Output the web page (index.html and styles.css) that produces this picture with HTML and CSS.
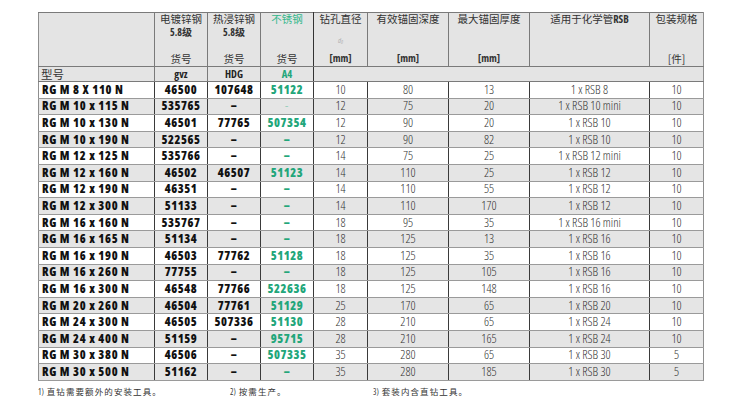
FILE: index.html
```html
<!DOCTYPE html>
<html lang="zh">
<head>
<meta charset="utf-8">
<title>RG M</title>
<link rel="stylesheet" href="styles.css">
</head>
<body>
<div class="page">
<table class="spec">
  <colgroup>
    <col class="c1"><col class="c2"><col class="c3"><col class="c4"><col class="c5"><col class="c6"><col class="c7"><col class="c8"><col class="c9">
  </colgroup>
  <thead>
    <tr class="h1">
      <th class="first"><div class="hd"></div></th>
      <th><div class="hd"><span class="l1">电镀锌钢</span><span class="l2">5.8级</span><span class="bot cj">货号</span></div></th>
      <th><div class="hd"><span class="l1">热浸锌钢</span><span class="l2">5.8级</span><span class="bot cj">货号</span></div></th>
      <th class="sep"><div class="hd"><span class="l1 green">不锈钢</span><span class="bot cj">货号</span></div></th>
      <th><div class="hd"><span class="l1">钻孔直径</span><span class="sym">d<sub>0</sub></span><span class="bot2 unit">[mm]</span></div></th>
      <th><div class="hd"><span class="l1">有效锚固深度</span><span class="bot unit">[mm]</span></div></th>
      <th><div class="hd"><span class="l1">最大锚固厚度</span><span class="bot unit">[mm]</span></div></th>
      <th><div class="hd"><span class="l1">适用于化学管<b class="rsb">RSB</b></span></div></th>
      <th class="last"><div class="hd"><span class="l1">包装规格</span><span class="bot cj">[件]</span></div></th>
    </tr>
    <tr class="h2">
      <th class="first model-h">型号</th>
      <th class="code">gvz</th>
      <th class="code">HDG</th>
      <th class="code green sep">A4</th>
      <th class="blank last" colspan="5"></th>
    </tr>
  </thead>
  <tbody>
    <tr><td class="m">RG M 8 X 110 N</td><td class="b">46500</td><td class="b">107648</td><td class="g">51122</td><td>10</td><td>80</td><td>13</td><td>1 x RSB 8</td><td>10</td></tr>
    <tr><td class="m">RG M 10 x 115 N</td><td class="b">535765</td><td class="b">–</td><td class="g light">-</td><td>12</td><td>75</td><td>20</td><td>1 x RSB 10 mini</td><td>10</td></tr>
    <tr><td class="m">RG M 10 x 130 N</td><td class="b">46501</td><td class="b">77765</td><td class="g">507354</td><td>12</td><td>90</td><td>20</td><td>1 x RSB 10</td><td>10</td></tr>
    <tr><td class="m">RG M 10 x 190 N</td><td class="b">522565</td><td class="b">–</td><td class="g">–</td><td>12</td><td>90</td><td>82</td><td>1 x RSB 10</td><td>10</td></tr>
    <tr><td class="m">RG M 12 x 125 N</td><td class="b">535766</td><td class="b">–</td><td class="g">–</td><td>14</td><td>75</td><td>25</td><td>1 x RSB 12 mini</td><td>10</td></tr>
    <tr><td class="m">RG M 12 x 160 N</td><td class="b">46502</td><td class="b">46507</td><td class="g">51123</td><td>14</td><td>110</td><td>25</td><td>1 x RSB 12</td><td>10</td></tr>
    <tr><td class="m">RG M 12 x 190 N</td><td class="b">46351</td><td class="b">–</td><td class="g">–</td><td>14</td><td>110</td><td>55</td><td>1 x RSB 12</td><td>10</td></tr>
    <tr><td class="m">RG M 12 x 300 N</td><td class="b">51133</td><td class="b">–</td><td class="g">–</td><td>14</td><td>110</td><td>170</td><td>1 x RSB 12</td><td>10</td></tr>
    <tr><td class="m">RG M 16 x 160 N</td><td class="b">535767</td><td class="b">–</td><td class="g">–</td><td>18</td><td>95</td><td>35</td><td>1 x RSB 16 mini</td><td>10</td></tr>
    <tr><td class="m">RG M 16 x 165 N</td><td class="b">51134</td><td class="b">–</td><td class="g">–</td><td>18</td><td>125</td><td>13</td><td>1 x RSB 16</td><td>10</td></tr>
    <tr><td class="m">RG M 16 x 190 N</td><td class="b">46503</td><td class="b">77762</td><td class="g">51128</td><td>18</td><td>125</td><td>35</td><td>1 x RSB 16</td><td>10</td></tr>
    <tr><td class="m">RG M 16 x 260 N</td><td class="b">77755</td><td class="b">–</td><td class="g">–</td><td>18</td><td>125</td><td>105</td><td>1 x RSB 16</td><td>10</td></tr>
    <tr><td class="m">RG M 16 x 300 N</td><td class="b">46548</td><td class="b">77766</td><td class="g">522636</td><td>18</td><td>125</td><td>148</td><td>1 x RSB 16</td><td>10</td></tr>
    <tr><td class="m">RG M 20 x 260 N</td><td class="b">46504</td><td class="b">77761</td><td class="g">51129</td><td>25</td><td>170</td><td>65</td><td>1 x RSB 20</td><td>10</td></tr>
    <tr><td class="m">RG M 24 x 300 N</td><td class="b">46505</td><td class="b">507336</td><td class="g">51130</td><td>28</td><td>210</td><td>65</td><td>1 x RSB 24</td><td>10</td></tr>
    <tr><td class="m">RG M 24 x 400 N</td><td class="b">51159</td><td class="b">–</td><td class="g">95715</td><td>28</td><td>210</td><td>165</td><td>1 x RSB 24</td><td>10</td></tr>
    <tr><td class="m">RG M 30 x 380 N</td><td class="b">46506</td><td class="b">–</td><td class="g">507335</td><td>35</td><td>280</td><td>65</td><td>1 x RSB 30</td><td>5</td></tr>
    <tr><td class="m">RG M 30 x 500 N</td><td class="b">51162</td><td class="b">–</td><td class="g">–</td><td>35</td><td>280</td><td>185</td><td>1 x RSB 30</td><td>5</td></tr>
  </tbody>
</table>
<div class="notes">
  <span class="note n1"><span class="num">1)</span> 直钻需要额外的安装工具。</span>
  <span class="note n2"><span class="num">2)</span> 按需生产。</span>
  <span class="note n3"><span class="num">3)</span> 套装内含直钻工具。</span>
</div>
</div>
</body>
</html>
```

FILE: styles.css
```css
html, body {
  margin: 0;
  padding: 0;
  background: #ffffff;
}
body {
  font-family: "Open Sans", "Noto Sans CJK SC", sans-serif;
  font-stretch: 75%;
  color: #1a1a1a;
}
.page {
  padding: 12px 0 0 38px;
}
.spec {
  border-collapse: collapse;
  table-layout: fixed;
  width: 665px;
  border: 1px solid #8e8e8e;
}
.c1 { width: 116px; }
.c2 { width: 53px; }
.c3 { width: 53px; }
.c4 { width: 53px; }
.c5 { width: 54px; }
.c6 { width: 81px; }
.c7 { width: 81px; }
.c8 { width: 120px; }
.c9 { width: 54px; }

th {
  padding: 0;
  background: #e4e4e4;
  font-weight: normal;
  border: 1px solid #7a7a7a;
  vertical-align: top;
}
.h1 th { height: 53px; }
.hd {
  height: 53px;
  display: flex;
  flex-direction: column;
  align-items: center;
  font-family: "Noto Sans CJK SC", sans-serif;
  font-size: 10.5px;
  line-height: 13px;
  color: #333333;
}
.l1 { line-height: 12px; }
.l2 {
  font-family: "Open Sans", "Noto Sans CJK SC", sans-serif;
  font-weight: bold;
  font-size: 10px;
  line-height: 11px;
  margin-top: 2px;
  color: #333;
}
.rsb {
  font-family: "Open Sans", sans-serif;
  font-size: 10.5px;
  color: #333;
}
.bot { margin-top: auto; margin-bottom: 1px; }
.unit {
  font-family: "Open Sans", sans-serif;
  font-weight: bold;
  font-size: 10.5px;
  color: #333;
}
.sym {
  margin-top: auto;
  font-family: "Open Sans", sans-serif;
  font-size: 7px;
  line-height: 9px;
  color: #b0b0b0;
  font-style: italic;
}
.sym sub { font-size: 5px; vertical-align: -1px; }
.bot2 { margin-top: 5px; margin-bottom: 1px; }

.h2 th {
  height: 14px;
  vertical-align: middle;
}
.model-h {
  text-align: left;
  padding-left: 2px;
  font-family: "Noto Sans CJK SC", sans-serif;
  font-size: 11.5px;
  line-height: 13px;
  color: #333;
}
.code {
  font-weight: bold;
  font-size: 10.5px;
  line-height: 13px;
  color: #222;
}
.blank { border-left: 1px solid #333; }
.green { color: #35b88c; }
.code.green { color: #22a67a; }
th.sep { border-right: 1px solid #333; }

td {
  padding: 0;
  height: 15.6px;
  line-height: 14px;
  text-align: center;
  font-size: 12.5px;
  font-weight: 300;
  color: #333;
  border-top: 1px solid #9a9a9a;
  border-bottom: 1px solid #9a9a9a;
  border-left: 1px solid #3a3a3a;
  border-right: 1px solid #3a3a3a;
  white-space: nowrap;
  overflow: hidden;
}
tbody tr:nth-child(even) td { background: #e5e5e5; }
td.m {
  text-align: left;
  padding-left: 3px;
  font-weight: 800;
  font-size: 12px;
  letter-spacing: 0.7px;
  color: #111;
  border-left: 1px solid #8e8e8e;
}
td.b {
  font-weight: 800;
  font-size: 12px;
  letter-spacing: 0.6px;
  color: #111;
}
td.g {
  font-weight: 800;
  font-size: 12px;
  letter-spacing: 0.6px;
  color: #22a67a;
}
td.g.light { color: #9ccfbd; font-weight: 400; }
td:last-child { border-right: 1px solid #8e8e8e; }
.first { border-left: 1px solid #8e8e8e; }
.last { border-right: 1px solid #8e8e8e; }

.notes {
  display: flex;
  margin-top: 4px;
  font-family: "Noto Sans CJK SC", sans-serif;
  font-size: 8.5px;
  line-height: 12px;
  color: #333;
  letter-spacing: 1.1px;
}
.num { font-family: "Open Sans", sans-serif; font-size: 8px; letter-spacing: 0; }
.n1 { width: 192px; }
.n2 { width: 143px; }
```
